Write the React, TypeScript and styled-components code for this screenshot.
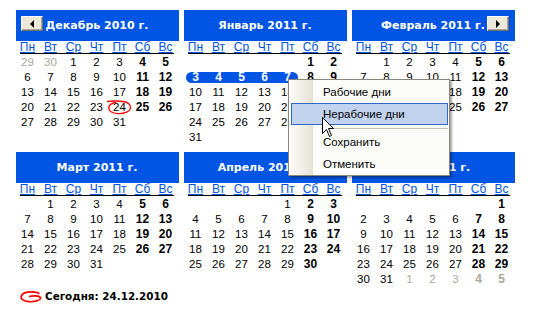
import React from 'react';
import styled, { createGlobalStyle } from 'styled-components';

const Global = createGlobalStyle`
  html, body { margin: 0; padding: 0; background: #ffffff; }
  body { font-family: "Liberation Sans", Arial, sans-serif; font-size: 11px; color: #000; }
`;

const Page = styled.div`
  position: relative;
  width: 533px;
  height: 312px;
  box-sizing: border-box;
  padding: 10px 0 0 16px;
  overflow: hidden;
`;

const Grid = styled.div`
  display: grid;
  grid-template-columns: repeat(3, 163px);
  column-gap: 5px;
  row-gap: 7px;
`;

const Cal = styled.div`
  display: flex;
  flex-direction: column;
  width: 163px;
`;

const Header = styled.div`
  height: 31px;
  background: #0055e5;
  display: grid;
  grid-template-columns: 22px 1fr 22px;
  align-items: center;
  padding: 0 6px 0 5px;
`;

const Title = styled.div`
  grid-column: 2;
  grid-row: 1;
  color: #ffffff;
  font-family: "DejaVu Sans", Verdana, sans-serif;
  font-weight: bold;
  font-size: 11px;
  text-align: center;
  white-space: nowrap;
`;

const NavButton = styled.div<{ $side: 'left' | 'right' }>`
  grid-column: ${(p) => (p.$side === 'left' ? 1 : 3)};
  grid-row: 1;
  align-self: start;
  margin-top: 6px;
  width: 22px;
  height: 15px;
  box-sizing: border-box;
  background: #ece9d8;
  border: 1px solid;
  border-color: #ffffff #716f64 #716f64 #ffffff;
  box-shadow: inset -1px -1px #aca899;
  display: flex;
  align-items: center;
  justify-content: center;
`;

const Arrow = styled.span<{ $side: 'left' | 'right' }>`
  width: 0;
  height: 0;
  border-top: 4px solid transparent;
  border-bottom: 4px solid transparent;
  ${(p) => (p.$side === 'left' ? 'border-right: 4px solid #000;' : 'border-left: 4px solid #000;')}
`;

const DayNames = styled.div`
  display: grid;
  grid-template-columns: repeat(7, 23px);
  height: 12px;
`;

const DayName = styled.span`
  text-align: center;
  line-height: 12px;
  font-size: 12px;
  color: #0054e3;
  text-decoration: underline;
`;

const Divider = styled.div`
  height: 1px;
  background: #000;
  margin: 0 5px 1px 4px;
`;

const Days = styled.div`
  display: grid;
  grid-template-columns: repeat(7, 23px);
  grid-template-rows: repeat(6, 15px);
`;

const Day = styled.span<{ $row: number; $col: number; $weekend: boolean; $other: boolean; $sel: boolean }>`
  position: relative;
  z-index: 1;
  grid-row: ${(p) => p.$row};
  grid-column: ${(p) => p.$col};
  text-align: center;
  line-height: 15px;
  font-size: ${(p) => (p.$weekend || p.$sel ? '12px' : '11.5px')};
  font-weight: ${(p) => (p.$weekend || p.$sel ? 'bold' : 'normal')};
  color: ${(p) => (p.$sel ? '#ffffff' : p.$other ? '#aca899' : '#000000')};
`;

const Band = styled.div<{ $row: number; $from: number; $to: number }>`
  grid-row: ${(p) => p.$row};
  grid-column: ${(p) => `${p.$from} / ${p.$to + 1}`};
  align-self: center;
  height: 11px;
  margin: 0 1px 0 2px;
  border-radius: 6px;
  background: #0055e5;
`;

const TodayMark = styled.svg`
  position: absolute;
  left: 0;
  top: 0;
  overflow: visible;
  pointer-events: none;
`;

const Footer = styled.div`
  display: flex;
  align-items: center;
  height: 14px;
  margin-top: 2px;
  padding-left: 4px;
  gap: 3px;
`;

const FooterText = styled.span`
  font-family: "DejaVu Sans", Verdana, sans-serif;
  font-weight: bold;
  font-size: 10.4px;
`;

const Menu = styled.div`
  position: absolute;
  left: 288px;
  top: 79px;
  width: 162px;
  box-sizing: border-box;
  border: 1px solid #8a867a;
  padding: 1px 1px 0 2px;
  background: linear-gradient(to right, #fdfdfb 0px, #e4e1d3 24px, #fcfcf9 24px);
  box-shadow: 2px 2px 2px rgba(0, 0, 0, 0.35);
  z-index: 5;
`;

const MenuItem = styled.div<{ $hot?: boolean }>`
  height: 22px;
  box-sizing: border-box;
  display: flex;
  align-items: center;
  padding-left: 31px;
  border: 1px solid ${(p) => (p.$hot ? '#316ac5' : 'transparent')};
  background: ${(p) => (p.$hot ? '#c1d2ee' : 'transparent')};
  white-space: nowrap;
  font-size: 11.5px;
`;

const MenuSep = styled.div`
  height: 6px;
  display: flex;
  align-items: center;
  padding-left: 30px;
  &::after {
    content: '';
    flex: 1;
    height: 1px;
    background: #c5c2b8;
  }
`;

const Cursor = styled.svg`
  position: absolute;
  left: 322px;
  top: 117px;
  z-index: 6;
`;

type Month = {
  title: string;
  start: number;
  days: number;
  lead?: number;
  trail?: boolean;
  nav?: 'left' | 'right';
  sel?: [number, number];
  today?: number;
};

const months: Month[] = [
  { title: 'Декабрь 2010 г.', start: 2, days: 31, lead: 30, nav: 'left', today: 24 },
  { title: 'Январь 2011 г.', start: 5, days: 31, sel: [3, 7] },
  { title: 'Февраль 2011 г.', start: 1, days: 28, nav: 'right' },
  { title: 'Март 2011 г.', start: 1, days: 31 },
  { title: 'Апрель 2011 г.', start: 4, days: 30 },
  { title: 'Май 2011 г.', start: 6, days: 31, trail: true },
];

const names = ['Пн', 'Вт', 'Ср', 'Чт', 'Пт', 'Сб', 'Вс'];

type Cell = { key: string; n: number; row: number; col: number; other: boolean; sel: boolean; today: boolean };

function cellsOf(m: Month): Cell[] {
  const out: Cell[] = [];
  const pos = (i: number) => ({ row: Math.floor(i / 7) + 1, col: (i % 7) + 1 });
  if (m.lead) {
    for (let i = 0; i < m.start; i++) {
      out.push({ key: 'p' + i, n: m.lead - m.start + 1 + i, ...pos(i), other: true, sel: false, today: false });
    }
  }
  for (let d = 1; d <= m.days; d++) {
    const i = m.start + d - 1;
    const sel = !!m.sel && d >= m.sel[0] && d <= m.sel[1];
    out.push({ key: 'd' + d, n: d, ...pos(i), other: false, sel, today: m.today === d });
  }
  if (m.trail) {
    const last = m.start + m.days - 1;
    const end = Math.floor(last / 7) * 7 + 6;
    for (let i = last + 1, n = 1; i <= end; i++, n++) {
      out.push({ key: 'n' + n, n, ...pos(i), other: true, sel: false, today: false });
    }
  }
  return out;
}

const Calendar: React.FC<{ m: Month }> = ({ m }) => {
  const cells = cellsOf(m);
  let band: React.ReactNode = null;
  if (m.sel) {
    const a = m.start + m.sel[0] - 1;
    const b = m.start + m.sel[1] - 1;
    band = <Band $row={Math.floor(a / 7) + 1} $from={(a % 7) + 1} $to={(b % 7) + 1} />;
  }
  return (
    <Cal>
      <Header>
        {m.nav && (
          <NavButton $side={m.nav}>
            <Arrow $side={m.nav} />
          </NavButton>
        )}
        <Title>{m.title}</Title>
      </Header>
      <DayNames>
        {names.map((n) => (
          <DayName key={n}>{n}</DayName>
        ))}
      </DayNames>
      <Divider />
      <Days>
        {band}
        {cells.map((c) => (
          <Day key={c.key} $row={c.row} $col={c.col} $weekend={c.col >= 6} $other={c.other} $sel={c.sel}>
            {c.n}
            {c.today && (
              <TodayMark width="23" height="15" viewBox="0 0 23 15">
                <path
                  d="M-1 1.5 C4 1 10 0.8 15 1.5 C20 2.2 23 4.5 22.5 8 C22 12 15 14 10 13.6 C4 13.3 0.5 11 0.8 7.5 C1 4.5 4 3 8 2.5"
                  fill="none"
                  stroke="#ff0000"
                  strokeWidth="1.4"
                />
              </TodayMark>
            )}
          </Day>
        ))}
      </Days>
    </Cal>
  );
};

export default function App() {
  return (
    <Page>
      <Global />
      <Grid>
        {months.map((m) => (
          <Calendar key={m.title} m={m} />
        ))}
      </Grid>
      <Footer>
        <svg width="22" height="13" viewBox="0 0 22 13">
          <path
            d="M9 6.5 C13 5.5 19 5.5 20.5 7.5 C21.5 10 15 12 9 11.7 C3 11.4 0.8 9 1.2 6.5 C1.8 3.2 7 1.8 12 1.8 C16 1.8 18.5 2.6 19.2 4"
            fill="none"
            stroke="#ff0000"
            strokeWidth="1.7"
          />
        </svg>
        <FooterText>Сегодня: 24.12.2010</FooterText>
      </Footer>
      <Menu>
        <MenuItem>Рабочие дни</MenuItem>
        <MenuItem $hot>Нерабочие дни</MenuItem>
        <MenuSep />
        <MenuItem>Сохранить</MenuItem>
        <MenuItem>Отменить</MenuItem>
      </Menu>
      <Cursor width="13" height="21" viewBox="0 0 13 21">
        <path d="M0.5 0.5 L0.5 16.5 L4.5 12.5 L7.5 19.5 L9.5 18.5 L6.5 11.5 L11.5 11.5 Z" fill="#ffffff" stroke="#000000" strokeWidth="1" />
      </Cursor>
    </Page>
  );
}
